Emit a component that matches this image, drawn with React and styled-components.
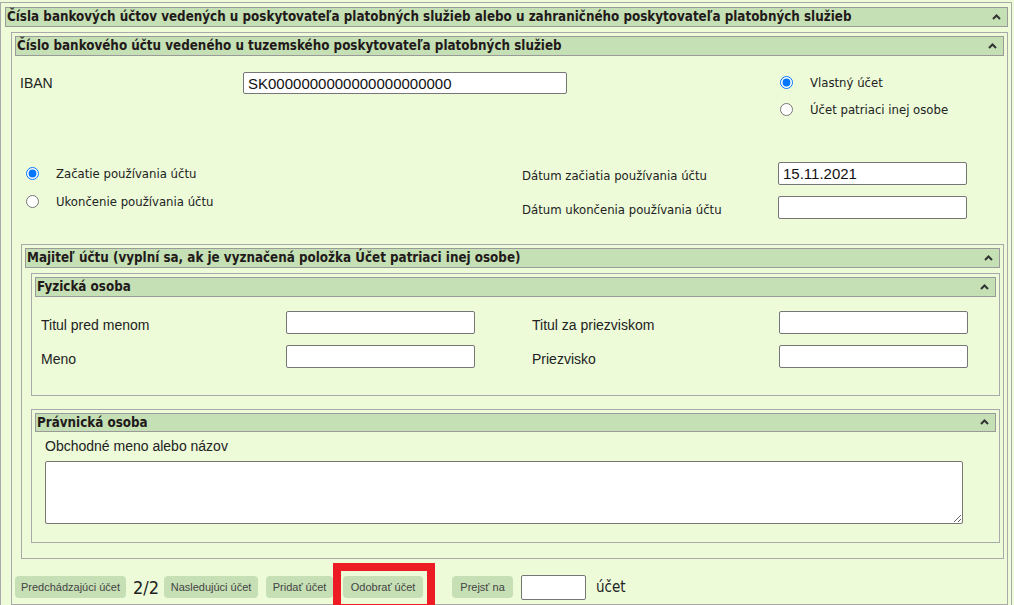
import React from "react";
import styled, { createGlobalStyle } from "styled-components";

const GlobalStyle = createGlobalStyle`
  html, body {
    margin: 0;
    padding: 0;
    background: #edfbd9;
  }
  body {
    font-family: "Liberation Sans", Arial, sans-serif;
    color: #222;
    overflow: hidden;
  }
`;

const tahoma = `"DejaVu Sans Condensed", "DejaVu Sans", Verdana, sans-serif`;

const Caret = () => (
  <svg width="9" height="6" viewBox="0 0 9 6">
    <polyline points="1,5 4.5,1.5 8,5" fill="none" stroke="#333" strokeWidth="2" />
  </svg>
);

export default function App() {
  return (
    <>
      <GlobalStyle />
      <Page>
        <Outer>
          <Bar>
            <span>Čísla bankových účtov vedených u poskytovateľa platobných služieb alebo u zahraničného poskytovateľa platobných služieb</span>
            <Caret />
          </Bar>

          <Section>
            <Bar>
              <span>Číslo bankového účtu vedeného u tuzemského poskytovateľa platobných služieb</span>
              <Caret />
            </Bar>

            <IbanRow>
              <Label>IBAN</Label>
              <TextInput $w={324} $h={22} defaultValue="SK0000000000000000000000" />
              <RadioGroup $top={-3}>
                <RadioItem $h={27}>
                  <Radio type="radio" name="owner" defaultChecked />
                  <RadioText>Vlastný účet</RadioText>
                </RadioItem>
                <RadioItem $h={27}>
                  <Radio type="radio" name="owner" />
                  <RadioText>Účet patriaci inej osobe</RadioText>
                </RadioItem>
              </RadioGroup>
            </IbanRow>

            <DatesBlock>
              <RadioCol>
                <RadioItem $h={28}>
                  <Radio type="radio" name="usage" defaultChecked />
                  <RadioText>Začatie používania účtu</RadioText>
                </RadioItem>
                <RadioItem $h={28}>
                  <Radio type="radio" name="usage" />
                  <RadioText>Ukončenie používania účtu</RadioText>
                </RadioItem>
              </RadioCol>
              <DateGrid>
                <DateLabel>Dátum začiatia používania účtu</DateLabel>
                <TextInput $w={189} $h={23} defaultValue="15.11.2021" />
                <DateLabel>Dátum ukončenia používania účtu</DateLabel>
                <TextInput $w={189} $h={23} />
              </DateGrid>
            </DatesBlock>

            <Section $top={25}>
              <Bar>
                <span>Majiteľ účtu (vyplní sa, ak je vyznačená položka Účet patriaci inej osobe)</span>
                <Caret />
              </Bar>

              <Section $top={5}>
                <Bar>
                  <span>Fyzická osoba</span>
                  <Caret />
                </Bar>
                <PersonGrid>
                  <GridLabel>Titul pred menom</GridLabel>
                  <TextInput $w={189} $h={23} />
                  <span />
                  <GridLabel>Titul za priezviskom</GridLabel>
                  <TextInput $w={189} $h={23} />
                  <GridLabel>Meno</GridLabel>
                  <TextInput $w={189} $h={23} />
                  <span />
                  <GridLabel>Priezvisko</GridLabel>
                  <TextInput $w={189} $h={23} />
                </PersonGrid>
              </Section>

              <Section $top={13} $bottom={12}>
                <Bar $h={19}>
                  <span>Právnická osoba</span>
                  <Caret />
                </Bar>
                <CompanyLabel>Obchodné meno alebo názov</CompanyLabel>
                <TextArea />
              </Section>
            </Section>

            <Pager>
              <PagerButton $w={111}>Predchádzajúci účet</PagerButton>
              <Counter>2/2</Counter>
              <PagerButton $w={94} $ml={5}>Nasledujúci účet</PagerButton>
              <PagerButton $w={67} $ml={8}>Pridať účet</PagerButton>
              <Highlighted>
                <PagerButton $w={80} $ml={10}>Odobrať účet</PagerButton>
              </Highlighted>
              <PagerButton $w={61} $ml={29}>Prejsť na</PagerButton>
              <TextInput $w={65} $h={25} $ml={8} />
              <Unit>účet</Unit>
            </Pager>
          </Section>
        </Outer>
      </Page>
    </>
  );
}

const Page = styled.div`
  padding-top: 2px;
  width: 1012px;
`;

const Outer = styled.div`
  border: 1px solid #a9a9a9;
  border-bottom: none;
  padding: 4px 3px 4px 4px;
  min-height: 610px;
  box-sizing: border-box;
`;

const Bar = styled.div`
  display: flex;
  align-items: center;
  justify-content: space-between;
  height: ${(p) => p.$h || 20}px;
  box-sizing: border-box;
  background: #c5e0b4;
  border: 1px solid #9a9a9a;
  padding: 0 6px 1px 1px;
  font-family: ${tahoma};
  font-weight: bold;
  font-size: 13.3px;
  color: #221a1a;
  white-space: nowrap;
`;

const Section = styled.div`
  border: 1px solid #a9a9a9;
  margin: ${(p) => p.$top ?? 5}px 0 ${(p) => p.$bottom ?? 0}px 6px;
  padding: 3px;
`;

const Label = styled.span`
  font-size: 14px;
  color: #222;
  line-height: 22px;
`;

const GridLabel = styled(Label)`
  line-height: 18px;
  padding-top: 4px;
`;

const RadioText = styled.span`
  font-family: ${tahoma};
  font-size: 13px;
  color: #222;
`;

const DateLabel = styled(RadioText)`
  padding-top: 3px;
`;

const TextInput = styled.input`
  box-sizing: border-box;
  width: ${(p) => p.$w}px;
  height: ${(p) => p.$h}px;
  margin: 0 0 0 ${(p) => p.$ml || 0}px;
  border: 1px solid #767676;
  border-radius: 2px;
  background: #fff;
  padding: 1px 4px;
  font-family: "Liberation Sans", Arial, sans-serif;
  font-size: 15px;
  color: #111;
  outline: none;
`;

const IbanRow = styled.div`
  display: grid;
  grid-template-columns: 223px 537px 1fr;
  align-items: start;
  margin-top: 16px;
  padding-left: 5px;
`;

const RadioGroup = styled.div`
  display: flex;
  flex-direction: column;
  margin-top: ${(p) => p.$top || 0}px;
`;

const RadioItem = styled.label`
  display: flex;
  align-items: center;
  gap: 17px;
  height: ${(p) => p.$h}px;
`;

const Radio = styled.input`
  width: 13px;
  height: 13px;
  margin: 0;
`;

const DatesBlock = styled.div`
  display: flex;
  align-items: flex-start;
  margin-top: 36px;
`;

const RadioCol = styled.div`
  display: flex;
  flex-direction: column;
  width: 496px;
  padding-left: 11px;
`;

const DateGrid = styled.div`
  display: grid;
  grid-template-columns: 256px 189px;
  row-gap: 11px;
  align-items: center;
  margin-top: 3px;
`;

const PersonGrid = styled.div`
  display: grid;
  grid-template-columns: 245px 189px 57px 247px 189px;
  row-gap: 11px;
  align-items: center;
  margin: 14px 0 24px 6px;
`;

const CompanyLabel = styled.div`
  font-size: 14px;
  line-height: 18px;
  margin: 5px 0 0 10px;
`;

const TextArea = styled.textarea`
  display: block;
  box-sizing: border-box;
  width: 918px;
  height: 63px;
  margin: 6px 0 15px 10px;
  border: 1px solid #767676;
  border-radius: 2px;
  background: #fff;
  outline: none;
`;

const Pager = styled.div`
  display: flex;
  align-items: center;
  margin-top: 14px;
  height: 28px;
`;

const PagerButton = styled.button`
  width: ${(p) => p.$w}px;
  height: 22px;
  margin-left: ${(p) => p.$ml || 0}px;
  padding: 0;
  border: none;
  border-radius: 4px;
  background: #c6dfb5;
  font-family: "Liberation Sans", Arial, sans-serif;
  font-size: 11px;
  color: #444;
  white-space: nowrap;
`;

const Counter = styled.span`
  margin-left: 7px;
  font-family: ${tahoma};
  font-size: 18px;
  color: #222;
`;

const Unit = styled.span`
  margin-left: 10px;
  font-family: ${tahoma};
  font-size: 15px;
  color: #222;
`;

const Highlighted = styled.div`
  position: relative;
  display: flex;

  &::after {
    content: "";
    position: absolute;
    left: 0;
    right: -12px;
    top: -13px;
    bottom: -14px;
    border: 8px solid #ed1c24;
    pointer-events: none;
  }
`;
